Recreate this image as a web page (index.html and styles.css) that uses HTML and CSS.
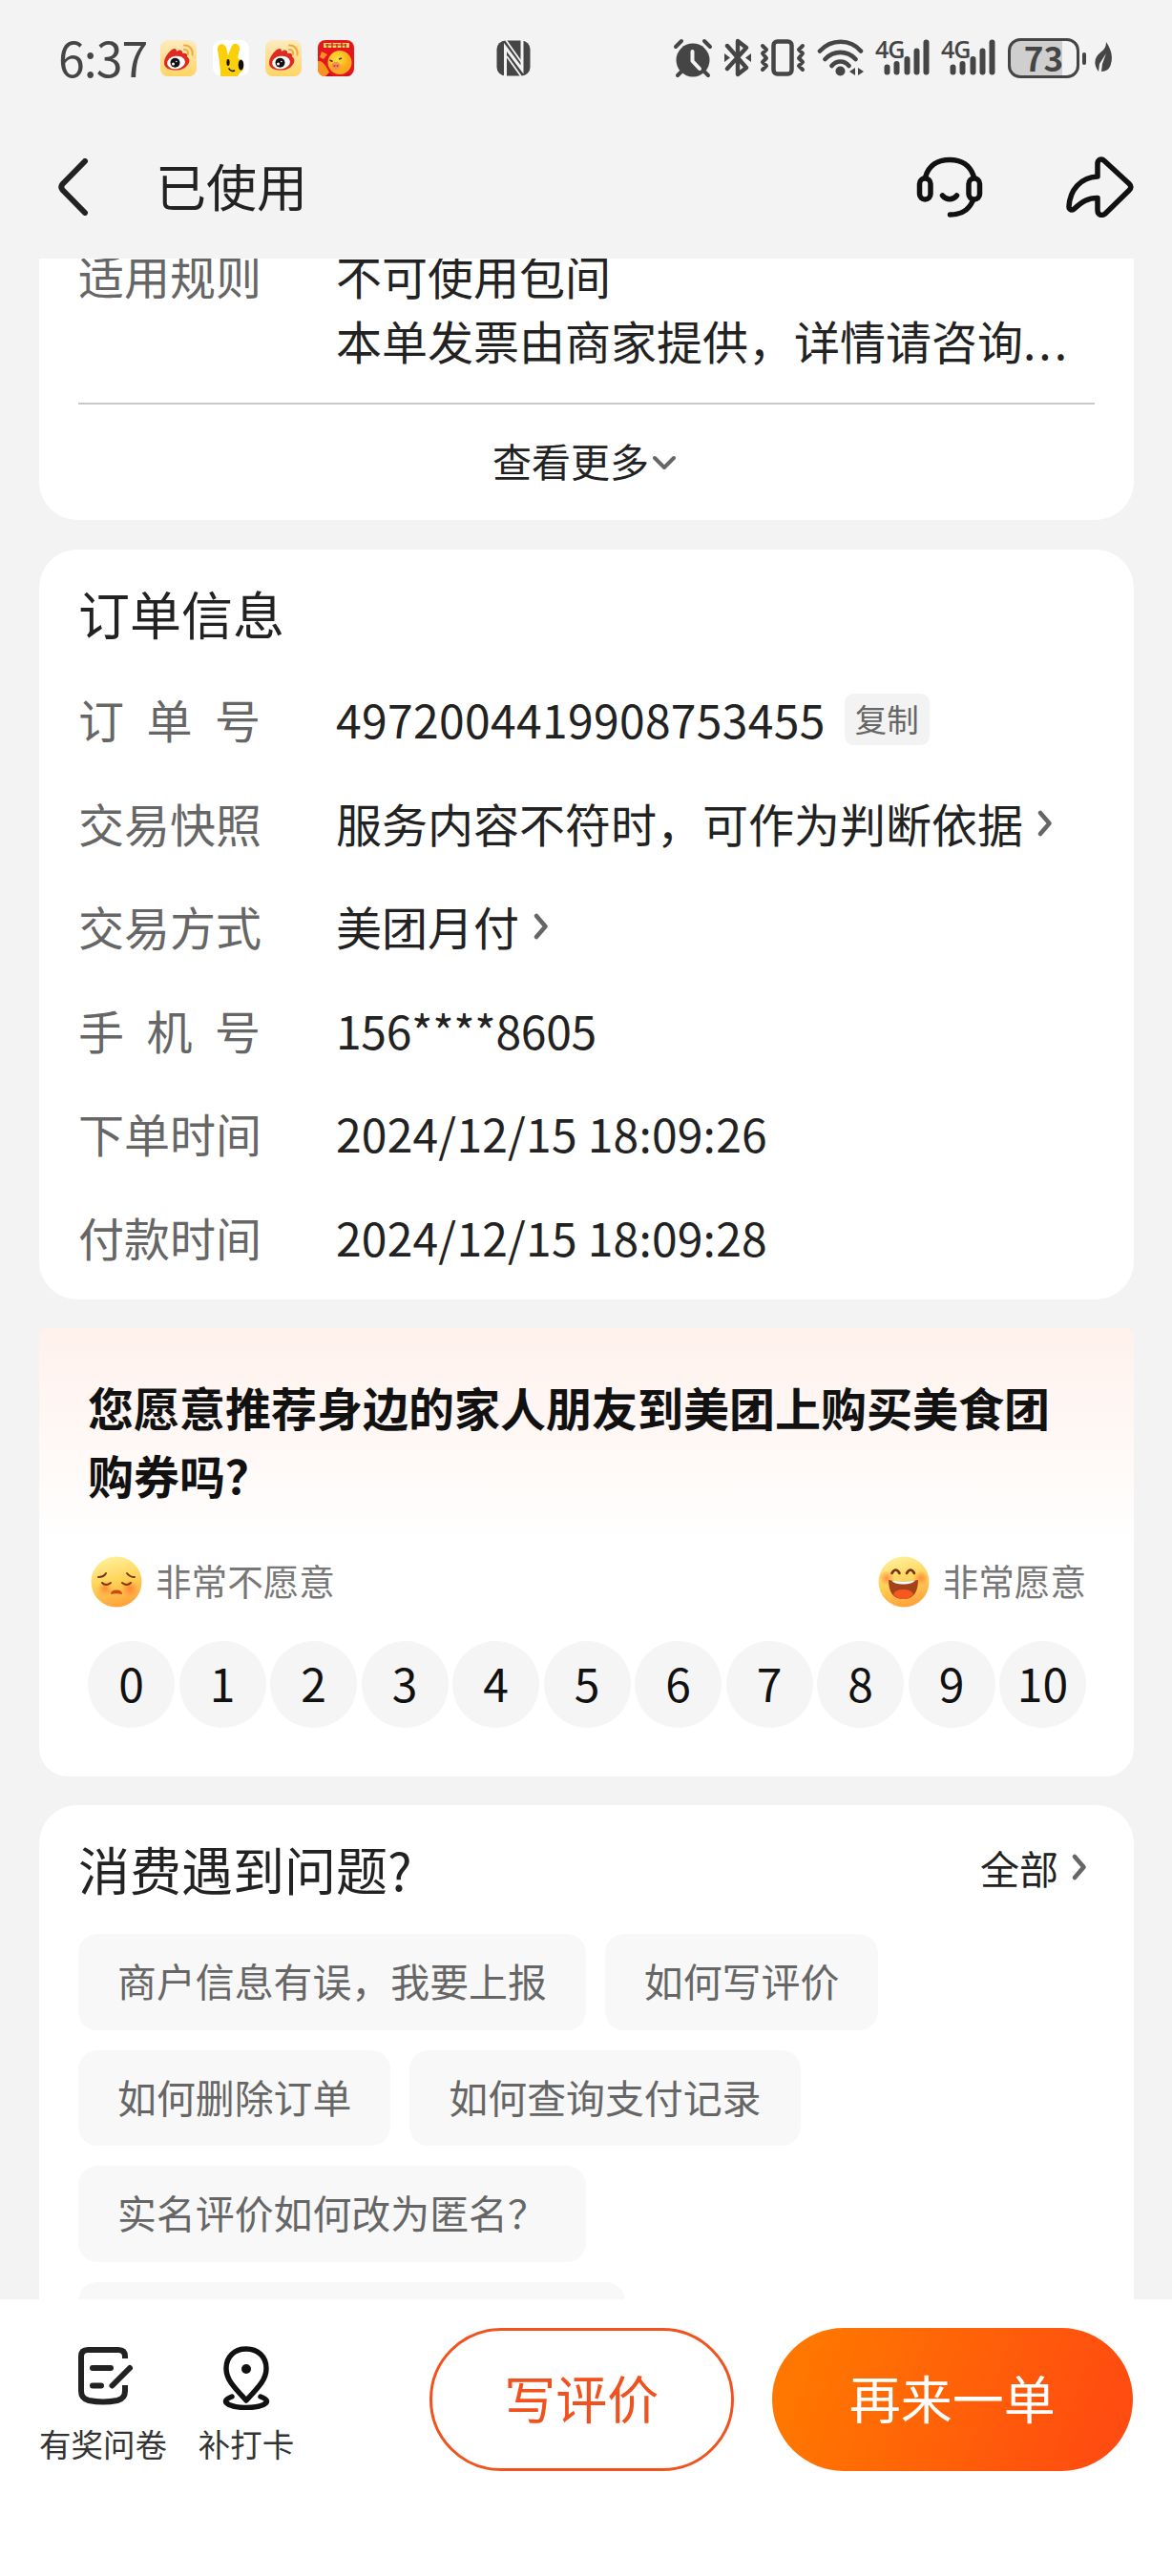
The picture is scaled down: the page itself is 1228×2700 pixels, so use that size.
FILE: index.html
```html
<!DOCTYPE html>
<html lang="zh-CN">
<head>
  <meta charset="UTF-8" />
  <meta name="viewport" content="width=device-width, initial-scale=1.0" />
  <title>已使用</title>
  <link rel="stylesheet" href="styles.css">
</head>
<body>
  <!-- shared shapes -->
  <svg class="defs" width="0" height="0">
    <defs>
      <linearGradient id="weibo-bg" x1="0" y1="0" x2="0" y2="1">
        <stop offset="0" stop-color="#fdebc0" />
        <stop offset="1" stop-color="#fdd465" />
      </linearGradient>
      <linearGradient id="face" x1="0.35" y1="0" x2="0.6" y2="1">
        <stop offset="0" stop-color="#fff09a" />
        <stop offset="0.5" stop-color="#ffd257" />
        <stop offset="1" stop-color="#ff9f38" />
      </linearGradient>
      <radialGradient id="blush">
        <stop offset="0" stop-color="#ff6a2a" stop-opacity="0.65" />
        <stop offset="1" stop-color="#ff6a2a" stop-opacity="0" />
      </radialGradient>
      <radialGradient id="duck" cx="0.4" cy="0.35">
        <stop offset="0" stop-color="#ffe53a" />
        <stop offset="1" stop-color="#f9a91a" />
      </radialGradient>
      <symbol id="weibo" viewBox="0 0 38 38">
        <rect width="38" height="38" rx="8" fill="url(#weibo-bg)" />
        <path d="M4 24C4 18 9 12 13 9.500c2.500-1.500 4 0 4 2.500 3-3 7-1.500 6 2 4-1 6 1 5 3.500 3 2 3 5 1 8C26 30 21 32 16 31.500 9 31.500 4 29 4 24z" fill="#e02a20" />
        <ellipse cx="16.500" cy="23.500" rx="9.500" ry="6.800" transform="rotate(-8 16.500 23.500)" fill="#fff" />
        <circle cx="15.500" cy="23.800" r="5" fill="#111" />
        <circle cx="13.500" cy="25" r="1.500" fill="#fff" />
        <circle cx="16.800" cy="22.500" r="0.800" fill="#fff" />
        <path d="M25 5.500c5.500-.5 9.500 4.500 8.500 10M25 10c3-.3 4.500 2 4 4.800" fill="none" stroke="#f5a838" stroke-width="2" stroke-linecap="round" />
      </symbol>
      <symbol id="signal" viewBox="0 0 58 42">
        <g stroke="#454545" stroke-width="6" stroke-linecap="round">
          <path d="M12.500 30.500v5M22.500 27v8.500M33.500 22v13.500M43.500 13.500v22M53.500 4.500v31" />
        </g>
      </symbol>
      <symbol id="arrow" viewBox="0 0 18 30">
        <path d="M4 4l9.500 11L4 26" fill="none" stroke="#666" stroke-width="4.600" stroke-linecap="round" stroke-linejoin="round" />
      </symbol>
    </defs>
  </svg>

  <div class="status-bar">
    <span class="time">6:37</span>
    <div class="apps">
      <svg width="38" height="38"><use href="#weibo" /></svg>
      <svg width="38" height="38" viewBox="0 0 38 38">
        <rect width="38" height="38" rx="9" fill="#fff" />
        <path d="M8 38C8 29 7 22 5 11 4 3 12 2 14 8l2 8 3-8c2-7 10-5 9 2l-2 9c5 2 7 6 6 11-1 4-5 4-6 8z" fill="#fbcf0a" />
        <ellipse cx="29.500" cy="26" rx="2.800" ry="5.500" fill="#111" />
        <ellipse cx="16" cy="23.500" rx="1.600" ry="3.400" fill="#111" />
        <path d="M17 30c1 2 3 3 5.500 2" fill="none" stroke="#111" stroke-width="1.600" stroke-linecap="round" />
      </svg>
      <svg width="38" height="38"><use href="#weibo" /></svg>
      <svg width="38" height="38" viewBox="0 0 38 38">
        <rect width="38" height="38" rx="8" fill="#e5161f" />
        <path d="M0 22c5-1 9 5 13 14l-5 2c-5 0-8-3-8-8zM4 12l6 3-4 5-4-2z" fill="#f9931e" />
        <path d="M6 3h27v5H6z" fill="#ffd65c" />
        <path d="M10 4v4M15 3v5M20 4v4M25 3v5M29 4v4M8 5h22" stroke="#b82018" stroke-width="1.200" />
        <circle cx="23" cy="23.500" r="12.500" fill="url(#duck)" />
        <ellipse cx="19" cy="27" rx="4.500" ry="4" fill="#f98a5a" />
        <circle cx="17.500" cy="27" r="1" fill="#c13a20" />
        <circle cx="20.500" cy="27" r="1" fill="#c13a20" />
        <path d="M12.500 21l3 1.500M22 20l3-1" stroke="#432" stroke-width="1.800" />
        <path d="M8 38l4-4 4 4zM28 38l4-3 3 2z" fill="#c4101a" />
      </svg>
    </div>
    <svg class="nfc" width="36" height="38" viewBox="0 0 36 38">
      <rect x="0.500" y="0.500" width="35" height="37" rx="9" fill="#454545" />
      <path d="M9.500 38V7.500L27 31V0" fill="none" stroke="#f3f3f3" stroke-width="3" />
      <path d="M10 0l17 24M11 17l15 21" fill="none" stroke="#f3f3f3" stroke-width="1.800" />
    </svg>
    <div class="indicators">
      <svg width="42" height="42" viewBox="0 0 42 42">
        <circle cx="21" cy="23" r="17.500" fill="#454545" />
        <path d="M3 9l6-6M33 3l6 6M10 34l-5 5M32 34l5 5" stroke="#454545" stroke-width="4" stroke-linecap="round" />
        <path d="M20.500 14v10l7.500 8" fill="none" stroke="#f3f3f3" stroke-width="4" stroke-linecap="round" stroke-linejoin="round" />
      </svg>
      <svg class="bluetooth" width="28" height="42" viewBox="0 0 28 42">
        <path d="M3 8l20 23-9 7V3l9 7L3 32" fill="none" stroke="#454545" stroke-width="4.400" stroke-linecap="round" stroke-linejoin="round" />
        <path d="M0 16l6 4.500L0 25zM28 16l-6 4.500 6 4.500z" fill="#454545" />
      </svg>
      <svg class="vibrate" width="48" height="42" viewBox="0 0 48 42">
        <rect x="14.500" y="3.500" width="19" height="34" rx="4" fill="none" stroke="#454545" stroke-width="4.500" />
        <path d="M3 8l4 4-4 4 4 5-4 4 4 4-4 4M45 8l-4 4 4 4-4 5 4 4-4 4 4 4" fill="none" stroke="#454545" stroke-width="4" stroke-linecap="round" stroke-linejoin="round" />
      </svg>
      <svg class="wifi" width="50" height="42" viewBox="0 0 50 42">
        <path d="M3 13.500c12-13 32-13 43 0M8.500 22c9-9.500 23-9.500 32 0M15.500 29c5-6 13-6 18 0" fill="none" stroke="#454545" stroke-width="4.600" stroke-linecap="round" />
        <circle cx="24.500" cy="34.500" r="5" fill="#454545" />
        <path d="M40 31v8l-6-4zM43 31v8l6-4z" fill="#454545" />
      </svg>
      <div class="signal">
        <svg width="58" height="42"><use href="#signal" /></svg>
        <span>4G</span>
      </div>
      <div class="signal">
        <svg width="58" height="42"><use href="#signal" /></svg>
        <span>4G</span>
      </div>
      <div class="battery">73</div>
      <div class="battery-tip"></div>
      <svg width="20" height="42" viewBox="0 0 20 42">
        <path d="M13 4c6 9 7 16 5 23-1 5-5 8-10 8l1-8 4-11-7 11-1 8C-1 27 1 20 7 15c4-3 6-6 6-11z" fill="#454545" />
      </svg>
    </div>
  </div>

  <header class="nav">
    <svg width="32" height="60" viewBox="0 0 32 60">
      <path d="M28 3L4.500 27q-2.500 3 0 6L28 57" fill="none" stroke="#222" stroke-width="6" stroke-linecap="round" />
    </svg>
    <h1>已使用</h1>
    <svg class="service" width="70" height="64" viewBox="0 0 70 64">
      <g fill="none" stroke="#111" stroke-width="5.500" stroke-linecap="round">
        <path d="M9.500 22C13 9 23 3.500 35 3.500S57 9 60.500 22M59 47c-4 9-12 14-23.500 14" />
        <rect x="3.500" y="23" width="11.500" height="22" rx="5.700" />
        <rect x="55" y="23" width="11.500" height="22" rx="5.700" />
        <path d="M27.500 41c4 5 11 5 15 0" />
      </g>
    </svg>
    <svg width="72" height="64" viewBox="0 0 72 64">
      <path d="M33 21V8c0-5 4-6.500 7-3.500l26 24q3.500 3.500 0 7L41 60c-4 3-8 1-8-4V43.500c-10 0-16 3.500-24 11-3 3-6 1-6-2C4 35 15 22 33 21z" fill="none" stroke="#111" stroke-width="5.500" stroke-linejoin="round" />
    </svg>
  </header>

  <main class="content">
    <section class="card rules">
      <div class="row">
        <span class="label">适用规则</span>
        <div class="value">
          <p>不可使用包间</p>
          <p>本单发票由商家提供，详情请咨询<span class="dots">...</span></p>
        </div>
      </div>
      <div class="more">
        查看更多
        <svg width="28" height="20" viewBox="0 0 28 20">
          <path d="M4 5l10 10L24 5" fill="none" stroke="#666" stroke-width="4" stroke-linecap="round" stroke-linejoin="round" />
        </svg>
      </div>
    </section>

    <section class="card order">
      <h2>订单信息</h2>
      <div class="row">
        <span class="label"><i>订</i><i>单</i><i>号</i></span>
        <span class="value number">4972004419908753455</span>
        <span class="copy">复制</span>
      </div>
      <div class="row">
        <span class="label">交易快照</span>
        <span class="value">服务内容不符时，可作为判断依据</span>
        <svg class="arrow" width="18" height="30"><use href="#arrow" /></svg>
      </div>
      <div class="row">
        <span class="label">交易方式</span>
        <span class="value">美团月付</span>
        <svg class="arrow" width="18" height="30"><use href="#arrow" /></svg>
      </div>
      <div class="row">
        <span class="label"><i>手</i><i>机</i><i>号</i></span>
        <span class="value phone">156****8605</span>
      </div>
      <div class="row">
        <span class="label">下单时间</span>
        <span class="value date">2024/12/15 18:09:26</span>
      </div>
      <div class="row">
        <span class="label">付款时间</span>
        <span class="value date">2024/12/15 18:09:28</span>
      </div>
    </section>

    <section class="card survey">
      <h3>您愿意推荐身边的家人朋友到美团上购买美食团购券吗？</h3>
      <div class="moods">
        <div class="mood">
          <svg width="54" height="54" viewBox="0 0 54 54">
            <circle cx="27" cy="27" r="26.500" fill="url(#face)" />
            <circle cx="15" cy="34" r="8" fill="url(#blush)" />
            <circle cx="41" cy="34" r="9" fill="url(#blush)" />
            <g fill="none" stroke="#7a3812" stroke-width="2" stroke-linecap="round">
              <path d="M8 22q6 0 8-4M38 18q3 4 8 4M12 28q4 4 9 0M33 28q5 4 9 0" />
            </g>
            <path d="M21 40q0-4.500 6-4.500t6 4.500q-6-1.500-12 0z" fill="#c94a14" />
          </svg>
          <span>非常不愿意</span>
        </div>
        <div class="mood">
          <svg width="54" height="54" viewBox="0 0 54 54">
            <circle cx="27" cy="27" r="26.500" fill="url(#face)" />
            <circle cx="9" cy="23" r="8" fill="url(#blush)" />
            <circle cx="45" cy="23" r="8" fill="url(#blush)" />
            <g fill="none" stroke="#7a3210" stroke-width="2.600" stroke-linecap="round">
              <path d="M14.500 18q4-7 8 0M30 18q4-7 8 0" />
            </g>
            <path d="M11 25q15.500 3 31 0c0 13-5 20-15.500 20S11 38 11 25z" fill="#a4421a" />
            <path d="M14 25.500q13 2 25 0-3 4-12.500 4T14 25.500z" fill="#fff" />
            <path d="M16 40q2-5 10.500-5T37 40q-4 5-10.500 5T16 40z" fill="#f5591f" />
          </svg>
          <span>非常愿意</span>
        </div>
      </div>
      <div class="scores">
        <span>0</span>
        <span>1</span>
        <span>2</span>
        <span>3</span>
        <span>4</span>
        <span>5</span>
        <span>6</span>
        <span>7</span>
        <span>8</span>
        <span>9</span>
        <span>10</span>
      </div>
    </section>

    <section class="card help">
      <div class="help-head">
        <h2>消费遇到问题?</h2>
        <span class="all">全部 <svg width="18" height="32" viewBox="0 0 18 30"><use href="#arrow" /></svg></span>
      </div>
      <div class="chips">
        <span class="chip">商户信息有误，我要上报</span>
        <span class="chip">如何写评价</span>
        <span class="chip">如何删除订单</span>
        <span class="chip">如何查询支付记录</span>
        <span class="chip">实名评价如何改为匿名？</span>
        <span class="chip empty"></span>
      </div>
    </section>
  </main>

  <footer class="actions">
    <div class="action survey-link">
      <svg width="64" height="64" viewBox="0 0 64 64">
        <g fill="none" stroke="#222" stroke-width="6" stroke-linecap="round">
          <path d="M52 14V12q0-7-7-7H13q-7 0-7 7v36q0 8 8 10 15 3 30 0 8-2 8-10v-6" stroke-linecap="butt" />
          <path d="M18 24h19M18 42.500h9M38.500 42.500L57 24" />
        </g>
      </svg>
      <span>有奖问卷</span>
    </div>
    <div class="action">
      <svg width="50" height="68" viewBox="0 0 50 68">
        <g fill="none" stroke="#111" stroke-width="5.500" stroke-linecap="round" stroke-linejoin="round">
          <path d="M25 58C12 44 4 36 4 24.500 4 12 13 4 25 4s21 8 21 20.500C46 36 38 44 25 58z" />
          <path d="M10 54c-8 3-8 6-3 8.500 9 4 27 4 36 0 5-2.500 5-5.500-3-8.500" />
        </g>
        <circle cx="25" cy="25" r="5" fill="#111" />
      </svg>
      <span>补打卡</span>
    </div>
    <button class="btn review">写评价</button>
    <button class="btn again">再来一单</button>
  </footer>
</body>
</html>
```
FILE: styles.css
```css
* {
  box-sizing: border-box;
}

body {
  width: 1228px;
  height: 2700px;
  margin: 0;
  display: flex;
  flex-direction: column;
  overflow: hidden;
  background-color: #f3f3f3;
  color: #222;
  font-family: "Noto Sans CJK SC", "Noto Sans", sans-serif;
  font-size: 48px;
}

h1, h2, h3, p {
  margin: 0;
  font-weight: normal;
}

svg {
  display: block;
  flex: none;
}

.defs {
  position: absolute;
}

/* status bar */
.status-bar {
  height: 122px;
  display: flex;
  align-items: center;
  padding-left: 61px;
  color: #454545;
}

.time {
  width: 107px;
  padding-bottom: 4px;
  font-size: 50px;
  line-height: 60px;
  letter-spacing: -1px;
}

.apps {
  display: flex;
  gap: 17px;
}

.nfc {
  margin-left: 149px;
}

.indicators {
  display: flex;
  align-items: center;
  margin-left: 149px;
}

.bluetooth {
  margin-left: 12px;
}

.vibrate {
  margin-left: 9px;
}

.wifi {
  margin-left: 12px;
}

.signal {
  position: relative;
  margin-left: 11px;
}

.signal span {
  position: absolute;
  top: 0;
  left: 0;
  font-family: "Open Sans", sans-serif;
  font-size: 25px;
  font-weight: 600;
  line-height: 22px;
  letter-spacing: -1px;
}

.battery {
  width: 75px;
  height: 42px;
  margin-left: 12px;
  border: 3px solid #454545;
  border-radius: 13px;
  background: linear-gradient(to right, #cfcfcf 78%, transparent 78%);
  font-size: 35px;
  font-weight: bold;
  line-height: 34px;
  text-align: center;
}

.battery-tip {
  width: 4px;
  height: 13px;
  margin: 0 8px 0 3px;
  border-radius: 2px;
  background-color: #454545;
}

/* title bar */
.nav {
  height: 149px;
  display: flex;
  align-items: center;
  padding: 0 39px 1px 61px;
}

.nav h1 {
  margin-left: 70px;
  padding-bottom: 4px;
  font-size: 53px;
  line-height: 64px;
}

.service {
  margin: 0 87px 0 auto;
}

/* scrolling cards */
.content {
  height: 2139px;
  flex: none;
  padding: 0 40px 0 41px;
  overflow: hidden;
}

.card {
  border-radius: 40px;
  background-color: #fff;
}

.row {
  height: 108.500px;
  display: flex;
  align-items: center;
}

.label {
  width: 270px;
  display: flex;
  padding-right: 79px;
  justify-content: space-between;
  color: #666;
  white-space: nowrap;
}

.label i {
  font-style: normal;
}

.rules {
  height: 291px;
  margin-top: -17px;
  padding: 0 41px;
  border-radius: 0 0 40px 40px;
}

.rules .row {
  height: 170px;
  align-items: flex-start;
  border-bottom: 2px solid #c8c8c8;
  line-height: 68px;
}

.rules .value {
  white-space: nowrap;
}

.dots {
  letter-spacing: 3px;
}

.more {
  height: 115px;
  display: flex;
  justify-content: center;
  align-items: center;
  gap: 2px;
  padding-right: 3px;
  font-size: 41px;
}

.more svg {
  margin-top: 7px;
}

.order {
  height: 786px;
  margin-top: 31px;
  padding: 35px 41px 0;
}

h2 {
  font-size: 54px;
  line-height: 64px;
}

.order h2 {
  margin-bottom: 24px;
}

.number {
  letter-spacing: 0.350px;
}

.phone {
  letter-spacing: -0.300px;
}

.date {
  letter-spacing: 0.200px;
}

.copy {
  width: 89px;
  height: 54px;
  margin: 2px 0 0 20px;
  border-radius: 9px;
  background-color: #f3f3f3;
  color: #666;
  font-size: 33.500px;
  line-height: 51px;
  text-align: center;
}

.arrow {
  margin: 2px 0 0 14px;
}

/* recommendation survey */
.survey {
  height: 470px;
  margin-top: 30px;
  padding: 49px 50px 0 51px;
  border-radius: 8px 8px 30px 30px;
  background-image: linear-gradient(#fff1ec, #fff 230px);
  color: #111;
}

.survey h3 {
  padding-bottom: 2px;
  margin-top: -2px;
  font-size: 48px;
  font-weight: bold;
  line-height: 71px;
}

.moods {
  display: flex;
  justify-content: space-between;
  margin-top: 46px;
}

.mood {
  display: flex;
  align-items: center;
  gap: 14px;
  padding-left: 3px;
  color: #777;
  font-size: 37.600px;
  line-height: 54px;
}

.mood span {
  padding-bottom: 3px;
}

.scores {
  display: flex;
  justify-content: space-between;
  margin-top: 34px;
}

.scores span {
  width: 91px;
  height: 91px;
  border-radius: 50%;
  background-color: #f5f5f5;
  line-height: 86px;
  text-align: center;
}

/* help topics */
.help {
  height: 600px;
  margin-top: 30px;
  padding: 35px 41px 0;
}

.help-head {
  display: flex;
  justify-content: space-between;
  align-items: center;
}

.all {
  display: flex;
  align-items: center;
  gap: 13px;
  padding: 0 7px 4px 0;
  font-size: 41px;
}

.chips {
  display: flex;
  flex-wrap: wrap;
  gap: 21px 20px;
  margin-top: 36px;
}

.chip {
  height: 100.500px;
  padding: 0 41px;
  border-radius: 20px;
  background-color: #f8f8f8;
  color: #666;
  font-size: 40.900px;
  line-height: 97px;
  white-space: nowrap;
}

.chip.empty {
  width: 573px;
}

/* bottom actions */
.actions {
  flex: 1;
  display: flex;
  align-items: flex-start;
  padding: 30px 41px 0 41px;
  background-color: #fff;
}

.action {
  display: flex;
  flex-direction: column;
  align-items: center;
  width: 100px;
  height: 145px;
  margin-right: 142px;
  padding-top: 18px;
  color: #333;
  font-size: 33.500px;
  line-height: 48px;
  white-space: nowrap;
}

.action span {
  margin-top: auto;
}

.survey-link {
  width: 134px;
  margin-right: 33px;
}

.survey-link svg {
  margin-left: 6px;
}

.btn {
  width: 319px;
  height: 150px;
  padding: 0 0 6px;
  border: 3px solid #f1531f;
  border-radius: 75px;
  background: none;
  color: #f0511e;
  font-family: inherit;
  font-size: 54px;
}

.btn.again {
  width: 379px;
  margin-left: 40px;
  border: none;
  background: linear-gradient(110deg, #ff7700 10%, #ff4c10 90%);
  color: #fff;
}
```
